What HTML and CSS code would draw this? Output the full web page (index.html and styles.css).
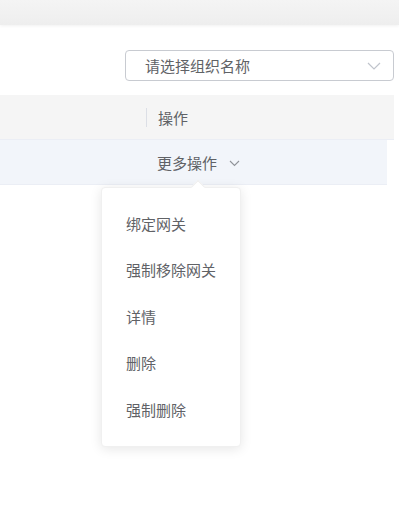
FILE: index.html
```html
<!DOCTYPE html>
<html lang="zh-CN">
<head>
<meta charset="utf-8">
<link rel="stylesheet" href="styles.css">
</head>
<body>
<div class="topbar"></div>
<div class="content">
  <div class="toolbar">
    <div class="select">
      <span class="placeholder">请选择组织名称</span>
      <svg class="chev" width="14" height="8" viewBox="0 0 14 8"><path d="M1 1 L7 7 L13 1" fill="none" stroke="#c0c4cc" stroke-width="1.2"/></svg>
    </div>
  </div>
  <div class="table">
    <div class="thead">
      <div class="cell-left"></div>
      <div class="cell-op"><span class="sep"></span><span class="htext">操作</span></div>
    </div>
    <div class="trow">
      <div class="cell-left"></div>
      <div class="cell-op">
        <span class="more">更多操作</span>
        <svg class="more-chev" width="11" height="7" viewBox="0 0 11 7"><path d="M1 1 L5.5 5.5 L10 1" fill="none" stroke="#909399" stroke-width="1.1"/></svg>
        <div class="menu">
          <span class="arrow"></span>
          <div class="item">绑定网关</div>
          <div class="item">强制移除网关</div>
          <div class="item">详情</div>
          <div class="item">删除</div>
          <div class="item">强制删除</div>
        </div>
      </div>
    </div>
  </div>
</div>
</body>
</html>
```
FILE: styles.css
```css
* { box-sizing: border-box; }
html, body { margin: 0; padding: 0; background: #fff; }
body {
  font-family: "Noto Sans CJK SC", "Microsoft YaHei", sans-serif;
  font-size: 15px;
  color: #606266;
  width: 399px;
  height: 532px;
  overflow: hidden;
}
.topbar {
  height: 25px;
  background: linear-gradient(#f4f4f4, #eeeeee);
  box-shadow: 0 1px 3px rgba(0,0,0,0.06);
}
.content { padding: 25px 5px 0 0; }
.toolbar { display: flex; justify-content: flex-end; }
.select {
  width: 269px;
  height: 31px;
  border: 1px solid #c8cbd1;
  border-radius: 4px;
  display: flex;
  align-items: center;
  padding: 0 12px 0 19px;
}
.placeholder { flex: 1; color: #606266; font-size: 15px; line-height: 1; }
.chev { display: block; }
.table { margin-top: 14px; }
.thead {
  display: flex;
  height: 45px;
  background: #f5f5f5;
  border-bottom: 1px solid #ebeef5;
}
.cell-left { width: 146px; flex: none; }
.cell-op { flex: 1; display: flex; align-items: center; position: relative; }
.sep { width: 1px; height: 19px; background: #dcdfe6; }
.htext { margin-left: 11px; color: #606266; }
.trow {
  display: flex;
  height: 45px;
  margin-right: 7px;
  background: #f2f5fa;
  border-bottom: 1px solid #ebeef5;
}
.trow .cell-op { padding-left: 11px; }
.more { color: #606266; }
.more-chev { margin-left: 12px; margin-top: 2px; }
.menu {
  position: absolute;
  left: -45px;
  top: 47px;
  width: 140px;
  background: #fff;
  border-radius: 4px;
  box-shadow: 0 2px 12px rgba(0,0,0,0.1);
  border: 1px solid #f0f0f0;
  padding: 13px 0 13px;
  z-index: 10;
}
.arrow {
  position: absolute;
  top: -6px;
  left: 91px;
  width: 10px;
  height: 10px;
  background: #fff;
  transform: rotate(45deg);
  border-left: 1px solid #eeeeee;
  border-top: 1px solid #eeeeee;
}
.item {
  height: 46.4px;
  line-height: 46.4px;
  padding-left: 24px;
  color: #606266;
  white-space: nowrap;
  position: relative;
}
```
